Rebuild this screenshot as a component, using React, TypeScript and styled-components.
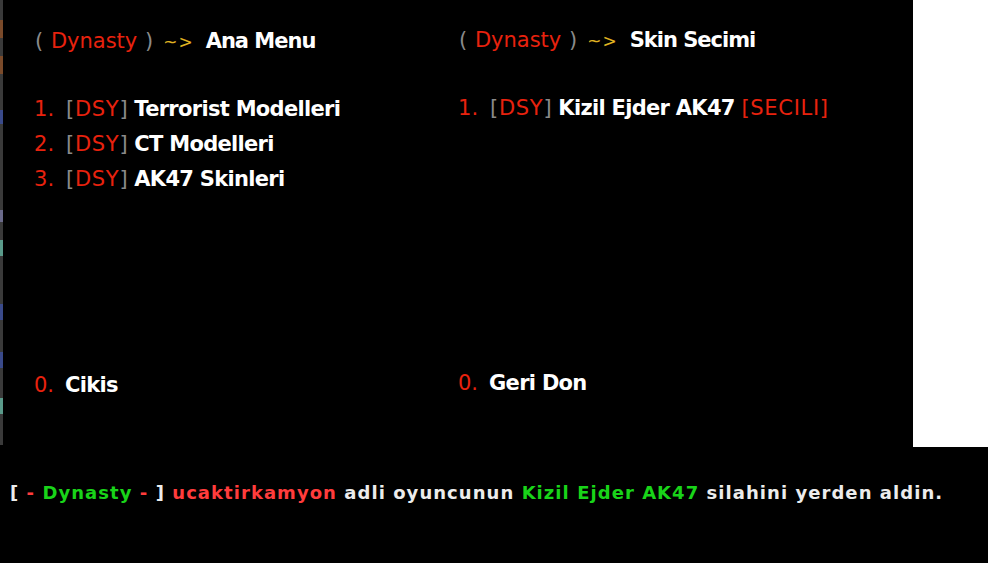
import React from "react";
import styled, { createGlobalStyle } from "styled-components";

const GlobalStyle = createGlobalStyle`
  html, body { margin: 0; padding: 0; background: #000; }
  body { width: 988px; height: 563px; overflow: hidden; }
`;

const Page = styled.div`
  width: 988px;
  height: 563px;
  display: flex;
  flex-direction: column;
  background: #000;
`;

const TopRow = styled.div`
  display: flex;
  height: 447px;
`;

const Overlay = styled.div`
  width: 913px;
  height: 447px;
  background: #000;
  display: flex;
`;

const WhiteBlock = styled.div`
  flex: 1;
  background: #fff;
`;

const LeftEdge = styled.div`
  width: 3px;
  height: 445px;
  background: linear-gradient(
    to bottom,
    #3a3a3a 0px, #3a3a3a 20px,
    #7a4a2a 20px, #7a4a2a 38px,
    #3a3a3a 38px, #3a3a3a 56px,
    #7a4a2a 56px, #7a4a2a 74px,
    #3a3a3a 74px, #3a3a3a 110px,
    #3a4a8a 110px, #3a4a8a 124px,
    #3a3a3a 124px, #3a3a3a 210px,
    #6a6a8a 210px, #6a6a8a 222px,
    #3a3a3a 222px, #3a3a3a 240px,
    #5a9a8a 240px, #5a9a8a 256px,
    #3a3a3a 256px, #3a3a3a 304px,
    #3a4a8a 304px, #3a4a8a 320px,
    #3a3a3a 320px, #3a3a3a 352px,
    #3a4a8a 352px, #3a4a8a 368px,
    #3a3a3a 368px, #3a3a3a 398px,
    #5a9a8a 398px, #5a9a8a 414px,
    #3a3a3a 414px, #3a3a3a 445px
  );
`;

const MenuColumn = styled.div<{ $left: number; $top: number; $bottom: number; $width: number }>`
  display: flex;
  flex-direction: column;
  margin-left: ${(p) => p.$left}px;
  width: ${(p) => p.$width}px;
  padding-top: ${(p) => p.$top}px;
  padding-bottom: ${(p) => p.$bottom}px;
  box-sizing: border-box;
  height: 447px;
  font-family: "DejaVu Sans", Verdana, sans-serif;
  font-size: 21px;
  line-height: 35px;
  white-space: pre;
`;

const Line = styled.div`
  height: 35px;
  color: #fff;
  display: flex;
  align-items: baseline;
`;

const ItemList = styled.div`
  margin-top: 33px;
  display: flex;
  flex-direction: column;
`;

const ExitLine = styled(Line)`
  margin-top: auto;
`;

const Gray = styled.span`
  color: #8a8a8a;
`;

const Red = styled.span`
  color: #e8220e;
`;

const Num = styled(Red)<{ $gap: number }>`
  margin-right: ${(p) => p.$gap}px;
`;

const Tag = styled.span`
  letter-spacing: 0.7px;
  margin-right: 6px;
`;

const TitleBrand = styled.span`
  padding-left: 1px;
  word-spacing: 1px;
  margin-right: 10px;
`;

const Arrow = styled.span`
  color: #e0b422;
  font-size: 17px;
  letter-spacing: 1px;
  margin-right: 12px;
`;

const Strong = styled.span<{ $tight?: boolean }>`
  color: #fff;
  font-weight: bold;
  letter-spacing: ${(p) => (p.$tight ? -1 : -0.7)}px;
`;

const ChatBar = styled.div`
  flex: 1;
  background: #000;
  padding: 36px 0 0 10px;
  font-family: "DejaVu Sans", Verdana, sans-serif;
  font-weight: bold;
  font-size: 18px;
  letter-spacing: 1.05px;
  line-height: 20px;
  color: #ececec;
  white-space: pre;
`;

const ChatRed = styled.span`
  color: #ff3c3c;
`;

const ChatGreen = styled.span`
  color: #19d419;
`;

const Title: React.FC<{ label: string }> = ({ label }) => (
  <Line>
    <TitleBrand>
      <Gray>(</Gray> <Red>Dynasty</Red> <Gray>)</Gray>
    </TitleBrand>
    <Arrow>~&gt;</Arrow>
    <Strong $tight>{label}</Strong>
  </Line>
);

const Item: React.FC<{ n: string; label: string; selected?: boolean }> = ({ n, label, selected }) => (
  <Line>
    <Num $gap={12}>{n}.</Num>
    <Tag>
      <Gray>[</Gray>
      <Red>DSY</Red>
      <Gray>]</Gray>
    </Tag>
    <Strong>{label}</Strong>
    {selected ? (
      <>
        <Strong> </Strong>
        <Tag>
          <Red>[SECILI]</Red>
        </Tag>
      </>
    ) : null}
  </Line>
);

const Exit: React.FC<{ label: string }> = ({ label }) => (
  <ExitLine>
    <Num $gap={11}>0.</Num>
    <Strong>{label}</Strong>
  </ExitLine>
);

export default function App() {
  return (
    <Page>
      <GlobalStyle />
      <TopRow>
        <Overlay>
          <LeftEdge />
          <MenuColumn $left={31} $width={424} $top={24} $bottom={44}>
            <Title label="Ana Menu" />
            <ItemList>
              <Item n="1" label="Terrorist Modelleri" />
              <Item n="2" label="CT Modelleri" />
              <Item n="3" label="AK47 Skinleri" />
            </ItemList>
            <Exit label="Cikis" />
          </MenuColumn>
          <MenuColumn $left={0} $width={450} $top={23} $bottom={46}>
            <Title label="Skin Secimi" />
            <ItemList>
              <Item n="1" label="Kizil Ejder AK47" selected />
            </ItemList>
            <Exit label="Geri Don" />
          </MenuColumn>
        </Overlay>
        <WhiteBlock />
      </TopRow>
      <ChatBar>
        [ <ChatRed>-</ChatRed> <ChatGreen>Dynasty</ChatGreen> <ChatRed>-</ChatRed> ] <ChatRed>ucaktirkamyon</ChatRed> adli oyuncunun{" "}
        <ChatGreen>Kizil Ejder AK47</ChatGreen> silahini yerden aldin.
      </ChatBar>
    </Page>
  );
}
